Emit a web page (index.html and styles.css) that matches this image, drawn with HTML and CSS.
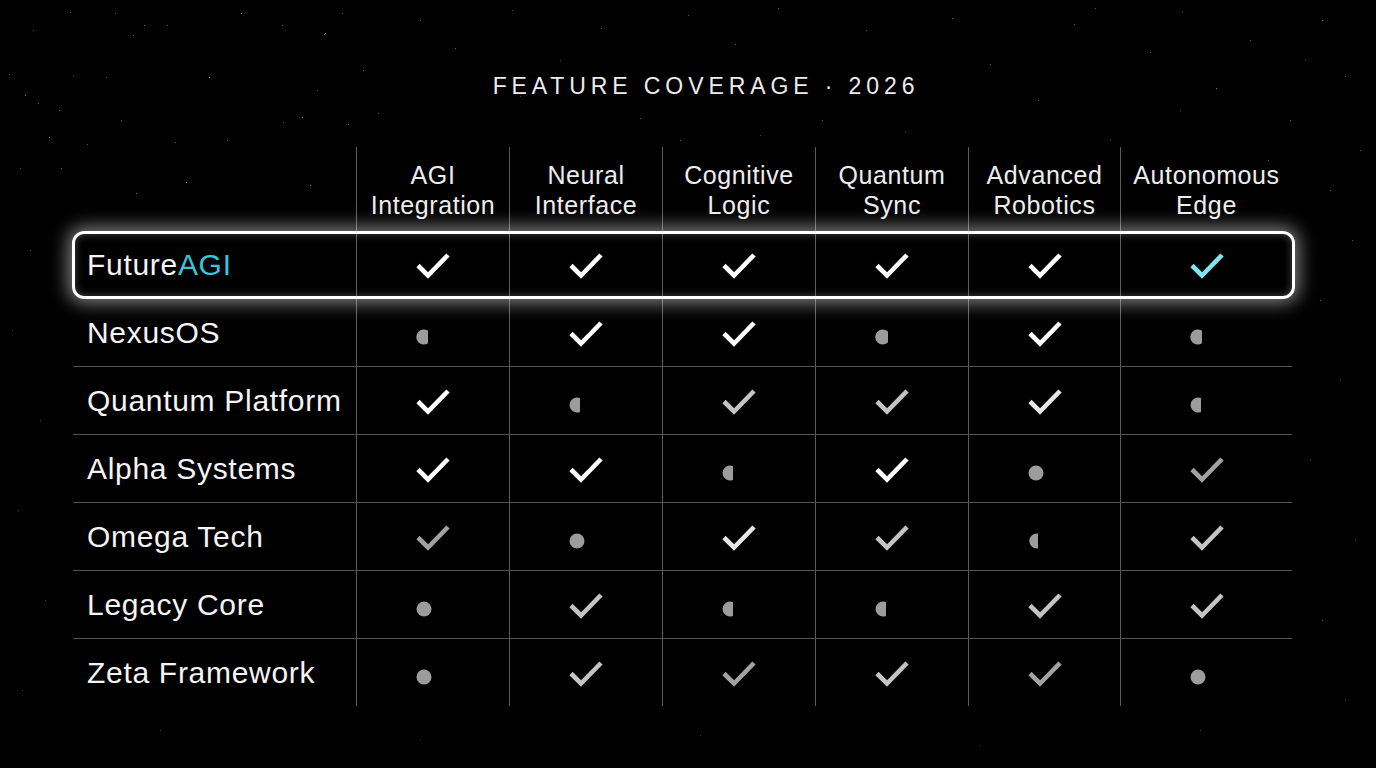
FILE: index.html
```html
<!DOCTYPE html>
<html lang="en">
<head>
<meta charset="utf-8">
<title>Feature Coverage 2026</title>
<link rel="stylesheet" href="styles.css">
</head>
<body>
<div class="stars" aria-hidden="true"></div>
<main class="page">
  <h1 class="title">FEATURE COVERAGE · 2026</h1>
  <div class="table">
    <div class="row head">
      <div class="cell name"></div>
      <div class="cell hcell">AGI<br>Integration</div>
      <div class="cell hcell">Neural<br>Interface</div>
      <div class="cell hcell">Cognitive<br>Logic</div>
      <div class="cell hcell">Quantum<br>Sync</div>
      <div class="cell hcell">Advanced<br>Robotics</div>
      <div class="cell hcell">Autonomous<br>Edge</div>
    </div>

    <div class="row hl">
      <div class="cell name">Future<span class="accent">AGI</span></div>
      <div class="cell"><svg class="mk b" viewBox="0 0 36 28"><path d="M3 14.5 L13 24.5 L33 4"/></svg></div>
      <div class="cell"><svg class="mk b" viewBox="0 0 36 28"><path d="M3 14.5 L13 24.5 L33 4"/></svg></div>
      <div class="cell"><svg class="mk b" viewBox="0 0 36 28"><path d="M3 14.5 L13 24.5 L33 4"/></svg></div>
      <div class="cell"><svg class="mk b" viewBox="0 0 36 28"><path d="M3 14.5 L13 24.5 L33 4"/></svg></div>
      <div class="cell"><svg class="mk b" viewBox="0 0 36 28"><path d="M3 14.5 L13 24.5 L33 4"/></svg></div>
      <div class="cell"><svg class="mk c" viewBox="0 0 36 28"><path d="M3 14.5 L13 24.5 L33 4"/></svg></div>
    </div>

    <div class="row">
      <div class="cell name">NexusOS</div>
      <div class="cell"><svg class="dot" viewBox="0 0 36 28"><path d="M13 11.8 A7.5 7.5 0 1 0 13 24.2 Z"/></svg></div>
      <div class="cell"><svg class="mk b" viewBox="0 0 36 28"><path d="M3 14.5 L13 24.5 L33 4"/></svg></div>
      <div class="cell"><svg class="mk b" viewBox="0 0 36 28"><path d="M3 14.5 L13 24.5 L33 4"/></svg></div>
      <div class="cell"><svg class="dot" viewBox="0 0 36 28"><path d="M14 12.7 A7.5 7.5 0 1 0 14 23.3 Z"/></svg></div>
      <div class="cell"><svg class="mk b" viewBox="0 0 36 28"><path d="M3 14.5 L13 24.5 L33 4"/></svg></div>
      <div class="cell"><svg class="dot" viewBox="0 0 36 28"><path d="M13 11.8 A7.5 7.5 0 1 0 13 24.2 Z"/></svg></div>
    </div>

    <div class="row">
      <div class="cell name">Quantum Platform</div>
      <div class="cell"><svg class="mk b" viewBox="0 0 36 28"><path d="M3 14.5 L13 24.5 L33 4"/></svg></div>
      <div class="cell"><svg class="dot" viewBox="0 0 36 28"><path d="M12 11.1 A7.5 7.5 0 1 0 12 24.9 Z"/></svg></div>
      <div class="cell"><svg class="mk l" viewBox="0 0 36 28"><path d="M3 14.5 L13 24.5 L33 4"/></svg></div>
      <div class="cell"><svg class="mk l" viewBox="0 0 36 28"><path d="M3 14.5 L13 24.5 L33 4"/></svg></div>
      <div class="cell"><svg class="mk w" viewBox="0 0 36 28"><path d="M3 14.5 L13 24.5 L33 4"/></svg></div>
      <div class="cell"><svg class="dot" viewBox="0 0 36 28"><path d="M12 11.1 A7.5 7.5 0 1 0 12 24.9 Z"/></svg></div>
    </div>

    <div class="row">
      <div class="cell name">Alpha Systems</div>
      <div class="cell"><svg class="mk b" viewBox="0 0 36 28"><path d="M3 14.5 L13 24.5 L33 4"/></svg></div>
      <div class="cell"><svg class="mk b" viewBox="0 0 36 28"><path d="M3 14.5 L13 24.5 L33 4"/></svg></div>
      <div class="cell"><svg class="dot" viewBox="0 0 36 28"><path d="M12 11.1 A7.5 7.5 0 1 0 12 24.9 Z"/></svg></div>
      <div class="cell"><svg class="mk b" viewBox="0 0 36 28"><path d="M3 14.5 L13 24.5 L33 4"/></svg></div>
      <div class="cell"><svg class="dot" viewBox="0 0 36 28"><circle cx="9" cy="18" r="7.5"/></svg></div>
      <div class="cell"><svg class="mk g" viewBox="0 0 36 28"><path d="M3 14.5 L13 24.5 L33 4"/></svg></div>
    </div>

    <div class="row">
      <div class="cell name">Omega Tech</div>
      <div class="cell"><svg class="mk g" viewBox="0 0 36 28"><path d="M3 14.5 L13 24.5 L33 4"/></svg></div>
      <div class="cell"><svg class="dot" viewBox="0 0 36 28"><circle cx="9" cy="18" r="7.5"/></svg></div>
      <div class="cell"><svg class="mk w" viewBox="0 0 36 28"><path d="M3 14.5 L13 24.5 L33 4"/></svg></div>
      <div class="cell"><svg class="mk l" viewBox="0 0 36 28"><path d="M3 14.5 L13 24.5 L33 4"/></svg></div>
      <div class="cell"><svg class="dot" viewBox="0 0 36 28"><path d="M11 10.6 A7.5 7.5 0 1 0 11 25.4 Z"/></svg></div>
      <div class="cell"><svg class="mk l" viewBox="0 0 36 28"><path d="M3 14.5 L13 24.5 L33 4"/></svg></div>
    </div>

    <div class="row">
      <div class="cell name">Legacy Core</div>
      <div class="cell"><svg class="dot" viewBox="0 0 36 28"><circle cx="9" cy="18" r="7.5"/></svg></div>
      <div class="cell"><svg class="mk l" viewBox="0 0 36 28"><path d="M3 14.5 L13 24.5 L33 4"/></svg></div>
      <div class="cell"><svg class="dot" viewBox="0 0 36 28"><path d="M12 11.1 A7.5 7.5 0 1 0 12 24.9 Z"/></svg></div>
      <div class="cell"><svg class="dot" viewBox="0 0 36 28"><path d="M12 11.1 A7.5 7.5 0 1 0 12 24.9 Z"/></svg></div>
      <div class="cell"><svg class="mk l" viewBox="0 0 36 28"><path d="M3 14.5 L13 24.5 L33 4"/></svg></div>
      <div class="cell"><svg class="mk l" viewBox="0 0 36 28"><path d="M3 14.5 L13 24.5 L33 4"/></svg></div>
    </div>

    <div class="row last">
      <div class="cell name">Zeta Framework</div>
      <div class="cell"><svg class="dot" viewBox="0 0 36 28"><circle cx="9" cy="18" r="7.5"/></svg></div>
      <div class="cell"><svg class="mk l" viewBox="0 0 36 28"><path d="M3 14.5 L13 24.5 L33 4"/></svg></div>
      <div class="cell"><svg class="mk g" viewBox="0 0 36 28"><path d="M3 14.5 L13 24.5 L33 4"/></svg></div>
      <div class="cell"><svg class="mk l" viewBox="0 0 36 28"><path d="M3 14.5 L13 24.5 L33 4"/></svg></div>
      <div class="cell"><svg class="mk g" viewBox="0 0 36 28"><path d="M3 14.5 L13 24.5 L33 4"/></svg></div>
      <div class="cell"><svg class="dot" viewBox="0 0 36 28"><circle cx="9" cy="18" r="7.5"/></svg></div>
    </div>
  </div>
</main>
</body>
</html>
```

FILE: styles.css
```css
* { box-sizing: border-box; }

html, body {
  margin: 0;
  padding: 0;
  background: #000;
  color: #f2f2f2;
  font-family: "Liberation Sans", Arial, sans-serif;
  width: 1376px;
  height: 768px;
  overflow: hidden;
}

body { position: relative; }

.stars {
  position: absolute;
  left: 0;
  top: 0;
  width: 1px;
  height: 1px;
  background: transparent;
  box-shadow:
    70px 12px 0 0 #666, 115px 13px 0 0 #555, 241px 13px 0 0 #888, 342px 13px 0 0 #555,
    33px 30px 0 0 #444, 144px 25px 0 0 #666, 167px 25px 0 0 #555, 282px 25px 0 0 #666,
    133px 35px 0 0 #666, 325px 33px 0 0 #777, 9px 74px 0 0 #666, 73px 75px 0 0 #555,
    209px 77px 0 0 #999, 25px 95px 0 0 #888, 59px 110px 0 0 #777, 106px 77px 0 0 #555,
    38px 103px 0 0 #555, 121px 120px 0 0 #666, 175px 142px 0 0 #555, 87px 144px 0 0 #555,
    49px 137px 0 0 #888, 227px 140px 0 0 #555, 61px 168px 0 0 #666, 20px 168px 0 0 #444,
    186px 182px 0 0 #999, 136px 193px 0 0 #777, 310px 185px 0 0 #777, 348px 124px 0 0 #666,
    317px 90px 0 0 #555, 302px 117px 0 0 #777, 378px 113px 0 0 #555, 283px 122px 0 0 #555,
    363px 70px 0 0 #666, 324px 34px 0 0 #777,
    420px 20px 0 0 #555, 455px 48px 0 0 #666, 512px 10px 0 0 #555, 560px 60px 0 0 #444,
    601px 28px 0 0 #666, 640px 118px 0 0 #555, 688px 15px 0 0 #555, 735px 44px 0 0 #555,
    778px 8px 0 0 #666, 822px 120px 0 0 #555, 866px 30px 0 0 #555, 905px 132px 0 0 #555,
    952px 18px 0 0 #666, 990px 64px 0 0 #555, 1038px 100px 0 0 #666, 1074px 24px 0 0 #555,
    1110px 140px 0 0 #555, 1150px 52px 0 0 #666, 1182px 12px 0 0 #555, 1216px 88px 0 0 #777,
    1250px 40px 0 0 #555, 1290px 120px 0 0 #666, 1322px 20px 0 0 #777, 1345px 76px 0 0 #666,
    1360px 150px 0 0 #555, 1330px 190px 0 0 #666, 1305px 60px 0 0 #555, 1268px 160px 0 0 #555,
    1352px 240px 0 0 #555, 1320px 300px 0 0 #555, 1340px 380px 0 0 #444, 1310px 460px 0 0 #555,
    1355px 540px 0 0 #444, 1322px 620px 0 0 #555, 1345px 700px 0 0 #444,
    30px 250px 0 0 #555, 12px 330px 0 0 #444, 40px 420px 0 0 #444, 18px 510px 0 0 #444,
    45px 600px 0 0 #444, 22px 690px 0 0 #444,
    160px 730px 0 0 #444, 420px 740px 0 0 #333, 700px 735px 0 0 #333, 980px 745px 0 0 #333,
    1200px 730px 0 0 #444, 520px 96px 0 0 #444, 1180px 110px 0 0 #444, 760px 135px 0 0 #444,
    680px 140px 0 0 #555, 1095px 8px 0 0 #555;
}

.page {
  position: relative;
  display: flex;
  flex-direction: column;
}

.title {
  margin: 72px 0 0 0;
  padding-left: 36px;
  text-align: center;
  font-weight: 400;
  font-size: 23px;
  line-height: 28px;
  letter-spacing: 4.9px;
  color: #ececec;
}

.table {
  margin: 47px 0 0 73px;
  width: 1219px;
  display: flex;
  flex-direction: column;
}

.row {
  display: grid;
  grid-template-columns: 283px 153px 153px 153px 153px 152px 172px;
  height: 68px;
  border-bottom: 1px solid #555;
}

.row.last { border-bottom: none; height: 67px; }

.row.head {
  height: 84px;
  border-bottom: none;
}

.row.hl {
  position: relative;
  border-bottom: none;
}

.row.hl::after {
  content: "";
  position: absolute;
  top: 0;
  bottom: 0;
  left: -1px;
  right: -3px;
  border: 3px solid #fff;
  border-radius: 12px;
  box-shadow: 0 0 18px 4px rgba(255, 255, 255, 0.5), inset 0 0 8px rgba(255, 255, 255, 0.28);
  pointer-events: none;
}

.cell {
  display: flex;
  align-items: center;
  justify-content: center;
  border-left: 1px solid #5c5c5c;
}

.cell.name {
  border-left: none;
  justify-content: flex-start;
  padding-left: 14px;
  font-size: 30px;
  letter-spacing: 0.7px;
  color: #f4f4f4;
}

.accent { color: #38c6da; }

.hcell {
  font-size: 25px;
  line-height: 30px;
  letter-spacing: 0.6px;
  text-align: center;
  color: #ededed;
  padding-top: 2px;
}

.mk {
  width: 36px;
  height: 28px;
  fill: none;
  stroke-width: 4.6;
  stroke-linejoin: miter;
  stroke-linecap: butt;
}
.mk.b { stroke: #ffffff; }
.mk.w { stroke: #e6e6e6; }
.mk.l { stroke: #c4c4c4; }
.mk.g { stroke: #a2a2a2; }
.mk.c { stroke: #7de6f0; }

.dot {
  width: 36px;
  height: 28px;
  fill: #9c9c9c;
}
```
